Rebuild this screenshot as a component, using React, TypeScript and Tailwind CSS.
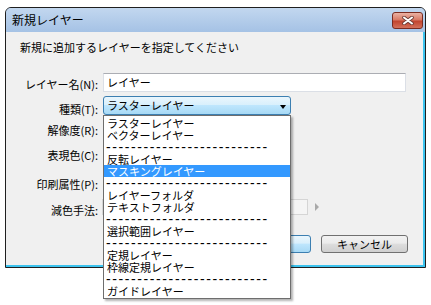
const ITEMS = [
  "ラスターレイヤー",
  "ベクターレイヤー",
  "-",
  "反転レイヤー",
  "マスキングレイヤー",
  "-",
  "レイヤーフォルダ",
  "テキストフォルダ",
  "-",
  "選択範囲レイヤー",
  "-",
  "定規レイヤー",
  "枠線定規レイヤー",
  "-",
  "ガイドレイヤー",
];

const SELECTED = 4;
const DASHES = "-".repeat(26);

function CloseButton() {
  return (
    <div className="flex h-[17px] w-[31px] items-center justify-center rounded-[3px] border border-[#7a2b20] bg-[linear-gradient(to_bottom,#eab2a4_0%,#d97a66_45%,#c2452f_55%,#d3705a_100%)]">
      <svg width="12" height="9" viewBox="0 0 12 9">
        <path d="M2 1.5 L10 7.5 M10 1.5 L2 7.5" stroke="#6a3a33" strokeWidth="3.6" strokeLinecap="round" />
        <path d="M2 1.5 L10 7.5 M10 1.5 L2 7.5" stroke="#ffffff" strokeWidth="2" strokeLinecap="round" />
      </svg>
    </div>
  );
}

function LayerList() {
  return (
    <div className="absolute left-0 top-full z-10 w-[188px] border border-[#6e6e6e] bg-white py-[1px] shadow-[2px_2px_2px_rgba(0,0,0,0.3)]">
      {ITEMS.map((item, i) =>
        item === "-" ? (
          <div
            key={i}
            className="flex h-[12px] items-center whitespace-nowrap pl-[2px] font-['Liberation_Sans',sans-serif] text-[14px] leading-[12px] tracking-[1.6px]"
          >
            {DASHES}
          </div>
        ) : (
          <div
            key={i}
            className={
              i === SELECTED
                ? "h-[12px] whitespace-nowrap bg-[#3399ff] pl-[3px] leading-[12px] text-white"
                : "h-[12px] whitespace-nowrap pl-[3px] leading-[12px]"
            }
          >
            {item}
          </div>
        ),
      )}
    </div>
  );
}

export default function App() {
  return (
    <div className="h-[305px] w-[431px] overflow-hidden bg-white pl-[5px] pt-[7px] font-['Noto_Sans_CJK_JP',sans-serif] text-[11px] leading-[14px] text-black">
      <div className="flex h-[261px] w-[421px] flex-col rounded-t-[6px] border border-[#1f1f1f] bg-[#a9c5e7]">
        {/* title bar */}
        <div className="flex h-[24px] shrink-0 items-center justify-between rounded-t-[5px] bg-[linear-gradient(to_bottom,#c2d7ef,#a5c2e5)] pl-[6px] pr-[2px]">
          <span className="text-[12px] leading-[16px]">新規レイヤー</span>
          <CloseButton />
        </div>

        {/* body */}
        <div className="flex-1 border-b-2 border-r-2 border-[#3cc3ee] bg-[#f0f0f0] pt-[8px]">
          <p className="pl-[14px]">新規に追加するレイヤーを指定してください</p>

          <div className="mt-[19px] flex flex-col">
            <div className="flex h-[23px]">
              <span className="mt-[4px] w-[92px] shrink-0 text-right">レイヤー名(N):</span>
              <div className="ml-[5px] h-[19px] w-[303px] border border-[#dbdfe6] border-t-[#abadb3] bg-white pl-[3px] leading-[17px]">
                レイヤー
              </div>
            </div>

            <div className="flex h-[25px]">
              <span className="mt-[6px] w-[92px] shrink-0 text-right">種類(T):</span>
              <div className="relative ml-[5px] h-[19px] w-[188px]">
                <div className="flex h-full items-center justify-between rounded-[3px] border border-[#3c7fb1] bg-[linear-gradient(to_bottom,#eaf6fd_0%,#d9f0fc_45%,#bee6fd_50%,#a7d9f5_100%)] pl-[3px] pr-[4px]">
                  <span className="leading-[17px]">ラスターレイヤー</span>
                  <span className="mt-[3px] h-0 w-0 border-x-[3.5px] border-t-[4px] border-x-transparent border-t-black" />
                </div>
                <LayerList />
              </div>
            </div>

            <div className="flex h-[25px]">
              <span className="mt-[2px] w-[92px] shrink-0 text-right">解像度(R):</span>
            </div>

            <div className="flex h-[25px]">
              <span className="mt-[2px] w-[92px] shrink-0 text-right">表現色(C):</span>
            </div>

            <div className="flex h-[24px]">
              <span className="mt-[6px] w-[92px] shrink-0 text-right">印刷属性(P):</span>
            </div>

            <div className="flex h-[20px]">
              <span className="mt-[8px] w-[92px] shrink-0 text-right">減色手法:</span>
              <div className="ml-[4px] mt-[4px] h-[16px] w-[206px] border border-[#d5d5d5] bg-[#f5f5f5]" />
              <span className="ml-[7px] mt-[8px] h-0 w-0 border-y-[4px] border-l-[4px] border-y-transparent border-l-[#a9a9a9]" />
            </div>
          </div>

          <div className="mt-[20px] flex justify-end gap-[10px] pr-[15px]">
            <div className="flex h-[18px] w-[87px] items-center justify-center rounded-[3px] border border-[#3c7fb1] bg-[linear-gradient(to_bottom,#eaf6fd_0%,#d9f0fc_45%,#bee6fd_50%,#a7d9f5_100%)]">
              OK
            </div>
            <div className="flex h-[18px] w-[87px] items-center justify-center rounded-[3px] border border-[#707070] bg-[linear-gradient(to_bottom,#f2f2f2_0%,#ebebeb_45%,#dddddd_50%,#cfcfcf_100%)]">
              キャンセル
            </div>
          </div>
        </div>
      </div>
    </div>
  );
}
